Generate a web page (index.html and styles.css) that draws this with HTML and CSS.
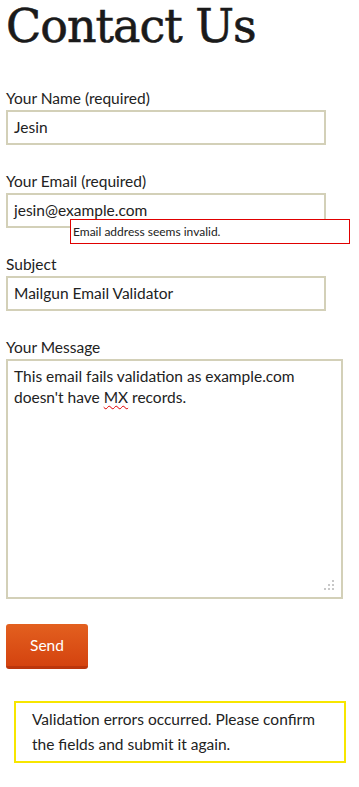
FILE: index.html
```html
<!DOCTYPE html>
<html lang="en">
<head>
<meta charset="utf-8">
<title>Contact Us</title>
<link rel="stylesheet" href="styles.css">
</head>
<body>
<main class="page">
  <h1 class="title">Contact Us</h1>
  <form class="form">
    <div class="field">
      <label class="label">Your Name (required)</label>
      <div class="input">Jesin</div>
    </div>
    <div class="field field-email">
      <label class="label">Your Email (required)</label>
      <div class="input">jesin@example.com</div>
      <div class="tip">Email address seems invalid.</div>
    </div>
    <div class="field">
      <label class="label">Subject</label>
      <div class="input">Mailgun Email Validator</div>
    </div>
    <div class="field">
      <label class="label">Your Message</label>
      <div class="textarea">This email fails validation as example.com doesn't have <span class="spell">MX</span> records.
        <svg class="grip" width="11" height="11" viewBox="0 0 11 11"><g fill="#c8c8c8"><rect x="8" y="0" width="2" height="2"/><rect x="4" y="4" width="2" height="2"/><rect x="8" y="4" width="2" height="2"/><rect x="0" y="8" width="2" height="2"/><rect x="4" y="8" width="2" height="2"/><rect x="8" y="8" width="2" height="2"/></g></svg>
      </div>
    </div>
    <button type="button" class="send">Send</button>
    <div class="notice">Validation errors occurred. Please confirm the fields and submit it again.</div>
  </form>
</main>
</body>
</html>
```
FILE: styles.css
```css
html, body {
  margin: 0;
  padding: 0;
  background: #fff;
}
body {
  font-family: Lato, "Noto Sans", sans-serif;
  color: #222;
}
.page {
  padding: 0 6px;
}
.title {
  margin: 0 0 38px;
  font-family: "DejaVu Serif", serif;
  font-weight: normal;
  font-size: 46px;
  line-height: 52px;
  color: #1a1a1a;
  letter-spacing: -1px;
  -webkit-text-stroke: 0.6px #1a1a1a;
}
.form {
  display: flex;
  flex-direction: column;
  align-items: flex-start;
}
.field {
  display: flex;
  flex-direction: column;
  margin-bottom: 28px;
}
.field-email {
  position: relative;
}
.label {
  font-size: 15.5px;
  line-height: 17px;
  padding-bottom: 3px;
  color: #222;
}
.input {
  box-sizing: border-box;
  width: 320px;
  height: 35px;
  border: 2px solid #d3d0b8;
  padding: 0 6px;
  font-size: 15.5px;
  line-height: 31px;
  color: #222;
}
.tip {
  position: absolute;
  left: 64px;
  top: 46px;
  box-sizing: border-box;
  width: 280px;
  height: 25px;
  border: 1px solid #e00000;
  background: #fff;
  padding: 0 2px;
  font-size: 12px;
  line-height: 23px;
  color: #222;
}
.textarea {
  position: relative;
  box-sizing: border-box;
  width: 337px;
  height: 240px;
  border: 2px solid #d3d0b8;
  padding: 5px 6px;
  font-size: 15.5px;
  line-height: 21px;
  color: #222;
}
.spell {
  text-decoration: underline wavy #e00000;
  text-decoration-thickness: 1px;
  text-underline-offset: 2px;
}
.grip {
  position: absolute;
  right: 6px;
  bottom: 6px;
}
.send {
  margin: -3px 0 0;
  width: 82px;
  height: 45px;
  border: 0;
  border-bottom: 3px solid #bb360c;
  border-radius: 3px;
  background: linear-gradient(#e3601f, #d4430f);
  color: #fff;
  font-family: Lato, "Noto Sans", sans-serif;
  font-size: 15.5px;
  padding: 0;
}
.notice {
  box-sizing: border-box;
  margin: 32px 0 0 8px;
  width: 332px;
  border: 2px solid #f7e600;
  padding: 4px 16px;
  font-size: 15.5px;
  line-height: 25px;
  color: #222;
}
```
